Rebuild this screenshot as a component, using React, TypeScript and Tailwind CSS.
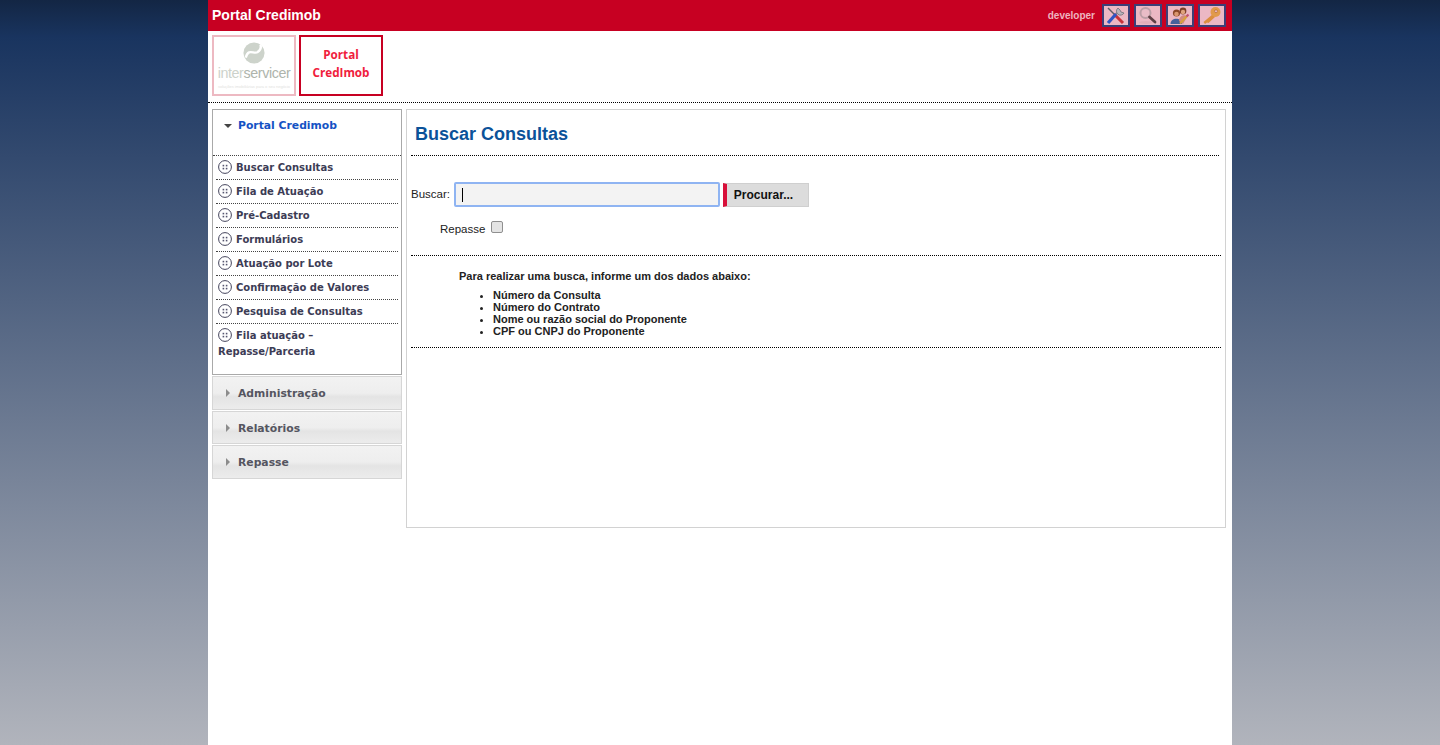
import type { ReactNode } from 'react';

const MENU_ITEMS = [
  'Buscar Consultas',
  'Fila de Atuação',
  'Pré-Cadastro',
  'Formulários',
  'Atuação por Lote',
  'Confirmação de Valores',
  'Pesquisa de Consultas',
];

const SEARCH_HINTS = [
  'Número da Consulta',
  'Número do Contrato',
  'Nome ou razão social do Proponente',
  'CPF ou CNPJ do Proponente',
];

function ToolButton({ children }: { children: ReactNode }) {
  return (
    <div className="flex h-[23px] w-[28px] items-center justify-center border-[2px] border-[#3b3f78] bg-[#ecb8c4]">
      <svg width="22" height="19" viewBox="0 0 22 19">
        {children}
      </svg>
    </div>
  );
}

function MenuBullet() {
  return (
    <svg width="14" height="14" viewBox="0 0 14 14" className="mr-[4px] inline-block shrink-0 align-[-3px]">
      <circle cx="7" cy="7" r="6.4" fill="none" stroke="#44445c" strokeWidth="1" />
      <rect x="4.6" y="4.8" width="1.6" height="1.6" fill="#55556f" />
      <rect x="7.8" y="4.8" width="1.6" height="1.6" fill="#55556f" />
      <rect x="4.6" y="7.8" width="1.6" height="1.6" fill="#55556f" />
      <rect x="7.8" y="7.8" width="1.6" height="1.6" fill="#55556f" />
    </svg>
  );
}

function CollapsedSection({ label, height }: { label: string; height: string }) {
  return (
    <div
      className={`flex ${height} items-center border border-[#d6d6d6] bg-[linear-gradient(#f2f2f2_0%,#eeeeee_50%,#e4e4e4_62%,#ececec_100%)] pl-[13px]`}
    >
      <span className="mr-[8px] h-0 w-0 border-y-[4px] border-l-[4px] border-y-transparent border-l-[#8c8c8c]" />
      <span className="pt-[3px] text-[10.8px] font-bold text-[#555560]">{label}</span>
    </div>
  );
}

export default function App() {
  return (
    <div className="flex min-h-[745px] justify-center bg-[linear-gradient(#132644_0%,#19345f_5%,#b1b4bc_100%)] font-['Liberation_Sans',Arial,sans-serif]">
      <div className="h-[745px] w-[1024px] overflow-hidden bg-white">
        <header className="flex h-[31px] items-center justify-between bg-[#c70022] pl-[4px] pr-[6px]">
          <span className="text-[14px] font-bold text-white">Portal Credimob</span>
          <div className="flex items-center gap-[4px]">
            <span className="mr-[3px] text-[10px] font-bold text-[#eeb3bf]">developer</span>
            <ToolButton>
              {/* ferramentas cruzadas */}
              <path d="M3 2 L9 8" stroke="#5c5c66" strokeWidth="1.4" />
              <path d="M9 8 L18 17" stroke="#c8323a" strokeWidth="3" />
              <path d="M11 8 L14 5" stroke="#8a8a94" strokeWidth="2" />
              <path d="M3 17 L11 8" stroke="#2f55c4" strokeWidth="3.2" />
              <path d="M13 2 A4 4 0 1 0 19 7 L16 6 L15 4 Z" fill="#b9b2bb" stroke="#6e6e78" strokeWidth="0.8" />
            </ToolButton>
            <ToolButton>
              <ellipse cx="9" cy="16.5" rx="7" ry="1.5" fill="#e2aeb9" />
              <circle cx="8.5" cy="7" r="5" fill="#e9bcc7" stroke="#bb9ea6" strokeWidth="2" />
              <path d="M12.5 11 L18 16" stroke="#5f4046" strokeWidth="2.8" strokeLinecap="round" />
            </ToolButton>
            <ToolButton>
              <path d="M1.5 18 C1.5 11 13 11 13 18 Z" fill="#47609c" />
              <circle cx="7.5" cy="7" r="3.6" fill="#8a4527" />
              <circle cx="7.5" cy="8" r="2.3" fill="#d9966f" />
              <path d="M10 15 C10 9 17 8 18 11 L14 18 Z" fill="#d28b7c" />
              <circle cx="14" cy="5" r="3.4" fill="#7e3f26" />
              <circle cx="14" cy="6" r="2.2" fill="#dfa27c" />
              <path d="M11 17.5 L19 9" stroke="#d9a23c" strokeWidth="2" />
              <path d="M17.5 10.5 L19.5 8.5" stroke="#c24f78" strokeWidth="2" />
            </ToolButton>
            <ToolButton>
              <path d="M12 8 L2.5 16 L4 18 L6 16.5 L7.5 17 L14 11 Z" fill="#dc8e3e" />
              <circle cx="14.5" cy="6" r="5" fill="#e19a4c" />
              <circle cx="15" cy="5.2" r="1.5" fill="#ecb8c4" stroke="#b96f2c" strokeWidth="0.7" />
            </ToolButton>
          </div>
        </header>

        <div className="flex h-[72px] items-start gap-[3px] border-b border-dotted border-black pl-[4px] pt-[4px]">
          <div className="flex h-[61px] w-[84px] flex-col items-center border-[2px] border-[#edb9c2] bg-white pt-[5px]">
            <svg width="22" height="22" viewBox="0 0 24 24">
              <circle cx="12" cy="12" r="11.5" fill="#cdd3cb" />
              <path d="M3 17 C6 6 12 14 16 11 C19 9 20 6 19 3" fill="none" stroke="#ffffff" strokeWidth="2.6" />
            </svg>
            <div className="mt-[2px] text-[14.3px] leading-[15px] tracking-[-0.4px] text-[#cdd2cb]">
              inter<span className="text-[#aeb4ac]">servicer</span>
            </div>
            <div className="mt-[3px] text-[4px] leading-[5px] text-[#dfe2de]">soluções imobiliárias para o seu negócio</div>
          </div>
          <div className="flex h-[61px] w-[84px] items-center justify-center border-[2px] border-[#c70022] bg-white pb-[6px] text-center font-['Open_Sans',sans-serif] text-[11.7px] font-bold leading-[18px] text-[#f0203c]">
            Portal
            <br />
            CredImob
          </div>
        </div>

        <div className="flex items-start gap-[4px] pl-[4px] pt-[6px]">
          <aside className="w-[190px] font-['DejaVu_Sans',Verdana,sans-serif]">
            <div className="h-[266px] border border-[#a9a9a9] bg-white">
              <div className="flex h-[46px] items-start border-b border-dotted border-[#444] pl-[11px] pt-[9px]">
                <span className="mr-[6px] mt-[5px] h-0 w-0 border-x-[4px] border-t-[4px] border-x-transparent border-t-[#444]" />
                <span className="text-[10.8px] font-bold leading-[14px] text-[#1452c4]">Portal Credimob</span>
              </div>
              <ul className="px-[3px]">
                {MENU_ITEMS.map((item) => (
                  <li
                    key={item}
                    className="flex h-[24px] items-center border-b border-dotted border-[#444] pb-[2px] pl-[2px] text-[10px] font-bold text-[#3c3c55]"
                  >
                    <MenuBullet />
                    <span className="pt-[2px]">{item}</span>
                  </li>
                ))}
                <li className="pl-[2px] pt-[4px] text-[10px] font-bold leading-[16px] text-[#3c3c55]">
                  <MenuBullet />
                  Fila atuação –
                  <br />
                  Repasse/Parceria
                </li>
              </ul>
            </div>
            <div className="mt-[1px] flex flex-col gap-[1px]">
              <CollapsedSection label="Administração" height="h-[34px]" />
              <CollapsedSection label="Relatórios" height="h-[33px]" />
              <CollapsedSection label="Repasse" height="h-[34px]" />
            </div>
          </aside>

          <main className="h-[419px] w-[820px] border border-[#d2d2d2] bg-white pl-[4px] pr-[4px]">
            <div className="ml-0 mr-[2px] h-[46px] border-b border-dotted border-black pl-[4px] pt-[13px]">
              <h1 className="text-[18px] font-bold leading-[22px] text-[#0b5299]">Buscar Consultas</h1>
            </div>
            <div className="flex items-center pt-[26px]">
              <label className="mr-[4px] text-[11.5px] text-[#222]">Buscar:</label>
              <div className="flex h-[25px] w-[266px] items-center rounded-[2px] border-[2px] border-[#8fb4f2] bg-[#f3f3f3] pl-[6px]">
                <span className="h-[14px] w-px bg-black" />
              </div>
              <button
                type="button"
                className="ml-[3px] h-[24px] w-[86px] border border-[#cfcfcf] border-l-[4px] border-l-[#d8103a] bg-[#dcdcdc] pr-[8px] text-[12px] font-bold text-[#111]"
              >
                Procurar...
              </button>
            </div>
            <div className="flex h-[30px] items-center pl-[29px] pt-[16px] text-[11.5px] text-[#222]">
              Repasse
              <span className="mb-[6px] ml-[6px] h-[12px] w-[12px] rounded-[2px] border border-[#8f8f8f] bg-[#e4e4e4]" />
            </div>
            <div className="mt-[18px] h-[93px] border-y border-dotted border-black">
              <p className="pl-[48px] pt-[14px] text-[11px] font-bold leading-[13px] text-[#222]">
                Para realizar uma busca, informe um dos dados abaixo:
              </p>
              <ul className="mt-[6px] list-disc pl-[82px] text-[11px] font-bold leading-[12px] text-[#222]">
                {SEARCH_HINTS.map((hint) => (
                  <li key={hint}>{hint}</li>
                ))}
              </ul>
            </div>
          </main>
        </div>
      </div>
    </div>
  );
}
